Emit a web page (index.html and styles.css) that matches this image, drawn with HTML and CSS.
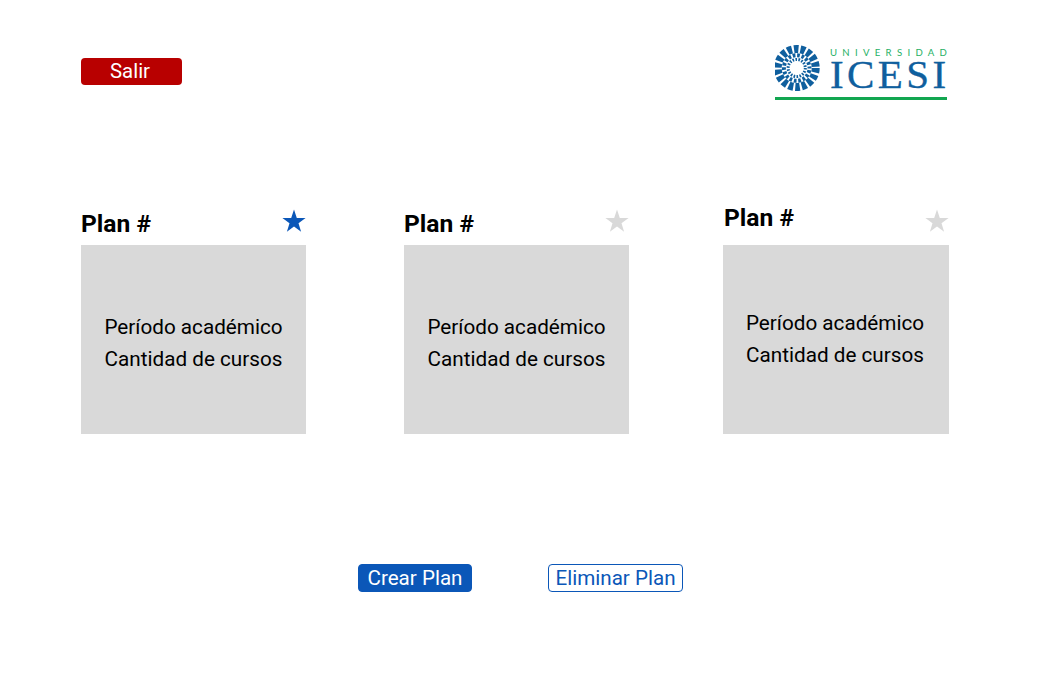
FILE: index.html
```html
<!DOCTYPE html>
<html lang="es">
<head>
<meta charset="utf-8">
<title>Planes</title>
<link rel="stylesheet" href="styles.css">
</head>
<body>
<main class="page">
  <header class="top">
    <button class="btn-exit">Salir</button>
    <svg class="logo" width="178" height="56" viewBox="0 0 178 56" role="img" aria-label="Universidad Icesi">
      <g fill="none" stroke="#0f5f9e" transform="translate(21.7 23)">
        <circle r="19" stroke-width="8" stroke-dasharray="4.6 2.03"/>
        <circle r="12.8" stroke-width="4" stroke-dasharray="2.7 1.77" stroke-dashoffset="2.2"/>
        <circle r="8.6" stroke-width="3" stroke-dasharray="1.6 1.4"/>
      </g>
      <text class="logo-small" x="55" y="11">UNIVERSIDAD</text>
      <text class="logo-big" x="55" y="43">ICESI</text>
      <rect x="0" y="52" width="172" height="3" fill="#12a650"/>
    </svg>
  </header>

  <section class="plans">
    <article class="plan plan-a">
      <div class="plan-head">
        <h2 class="plan-title">Plan #</h2>
        <svg class="star star-on" viewBox="0 0 24 24"><polygon points="12,.5 14.8,8.9 23.6,8.9 16.5,14.2 19.1,22.8 12,17.6 4.9,22.8 7.5,14.2 .4,8.9 9.2,8.9"/></svg>
      </div>
      <div class="plan-box"><p>Período académico</p><p>Cantidad de cursos</p></div>
    </article>
    <article class="plan plan-b">
      <div class="plan-head">
        <h2 class="plan-title">Plan #</h2>
        <svg class="star" viewBox="0 0 24 24"><polygon points="12,.5 14.8,8.9 23.6,8.9 16.5,14.2 19.1,22.8 12,17.6 4.9,22.8 7.5,14.2 .4,8.9 9.2,8.9"/></svg>
      </div>
      <div class="plan-box"><p>Período académico</p><p>Cantidad de cursos</p></div>
    </article>
    <article class="plan plan-c">
      <div class="plan-head">
        <h2 class="plan-title">Plan #</h2>
        <svg class="star" viewBox="0 0 24 24"><polygon points="12,.5 14.8,8.9 23.6,8.9 16.5,14.2 19.1,22.8 12,17.6 4.9,22.8 7.5,14.2 .4,8.9 9.2,8.9"/></svg>
      </div>
      <div class="plan-box"><p>Período académico</p><p>Cantidad de cursos</p></div>
    </article>
  </section>

  <div class="actions">
    <button class="btn btn-primary">Crear Plan</button>
    <button class="btn btn-outline">Eliminar Plan</button>
  </div>
</main>
</body>
</html>
```
FILE: styles.css
```css
* { box-sizing: border-box; }
html, body { margin: 0; background: #fff; }
.page {
  width: 1045px;
  height: 678px;
  overflow: hidden;
  font-family: Roboto, "Liberation Sans", sans-serif;
  color: #000;
}
.top {
  display: flex;
  justify-content: space-between;
  align-items: flex-start;
  padding: 45px 92px 0 81px;
  height: 209px;
}
.btn-exit {
  width: 101px;
  height: 27px;
  margin-top: 13px;
  border: 0;
  border-radius: 4px;
  padding: 0 3px 0 0;
  background: #b80000;
  color: #fff;
  font: 400 20.4px/27px Roboto, sans-serif;
}
.logo { display: block; }
.logo-small {
  font: 400 9.6px Lato, sans-serif;
  letter-spacing: 5.3px;
  fill: #25b064;
}
.logo-big {
  font: 400 41px "Liberation Serif", serif;
  letter-spacing: 3.4px;
  fill: #0f5f9e;
  stroke: #0f5f9e;
  stroke-width: .35px;
}
.plans { display: flex; padding-left: 81px; }
.plan { width: 225px; flex: none; }
.plan-b { margin-left: 98px; }
.plan-c { margin-left: 94px; width: 226px; }
.plan-head {
  height: 36px;
  display: flex;
  justify-content: space-between;
  align-items: flex-start;
}
.plan-title {
  margin: 1px 0 0;
  font: 700 24.6px/28px Roboto, sans-serif;
}
.star { width: 24px; height: 24px; display: block; fill: #d9d9d9; }
.star-on { fill: #0b57b8; }
.plan-box {
  height: 189px;
  background: #d9d9d9;
  display: flex;
  flex-direction: column;
  justify-content: center;
  align-items: center;
  padding-top: 6px;
  font-size: 20.7px;
  line-height: 32px;
}
.plan-box p { margin: 0; }
.plan-c .plan-title { margin-top: -5px; margin-left: 1px; }
.plan-c .plan-box { padding: 0 2px 1px 0; }
.actions {
  display: flex;
  padding: 130px 0 0 358px;
  gap: 76px;
}
.btn {
  height: 28px;
  border-radius: 4px;
  padding: 0;
  font: 400 20.6px/26px Roboto, sans-serif;
}
.btn-primary { width: 114px; border: 1px solid #0b57b8; background: #0b57b8; color: #fff; }
.btn-outline { width: 135px; border: 1px solid #0b57b8; background: #fff; color: #0b57b8; }
```
